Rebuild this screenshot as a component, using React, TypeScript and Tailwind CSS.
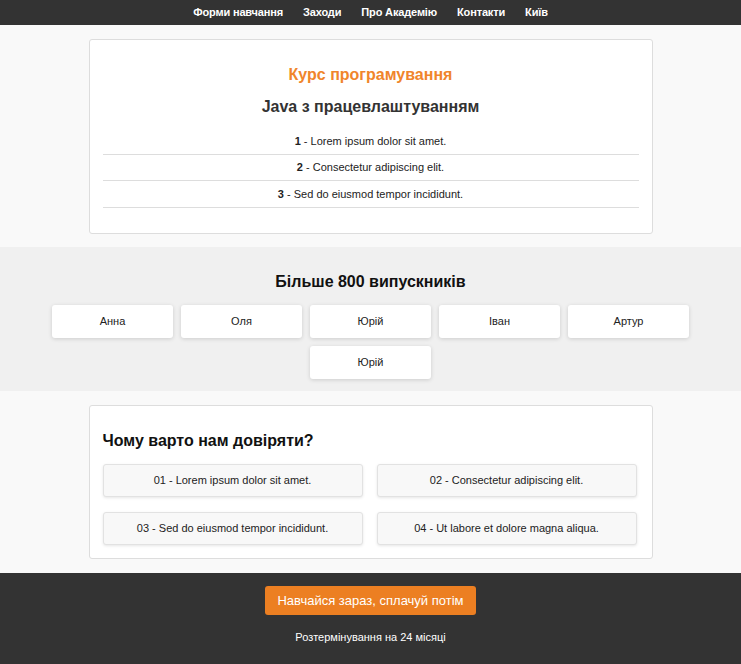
import React from 'react';

const navItems = ['Форми навчання', 'Заходи', 'Про Академію', 'Контакти', 'Київ'];
const courseItems = [
  ['1', 'Lorem ipsum dolor sit amet.'],
  ['2', 'Consectetur adipiscing elit.'],
  ['3', 'Sed do eiusmod tempor incididunt.'],
];
const graduates = ['Анна', 'Оля', 'Юрій', 'Іван', 'Артур', 'Юрій'];
const reasons = [
  '01 - Lorem ipsum dolor sit amet.',
  '02 - Consectetur adipiscing elit.',
  '03 - Sed do eiusmod tempor incididunt.',
  '04 - Ut labore et dolore magna aliqua.',
];

const App: React.FC = () => {
  return (
    <div className="min-h-[664px] bg-[#f9f9f9] font-['Liberation_Sans',Arial,sans-serif] text-[#222]">
      {/* header nav */}
      <nav className="h-[25px] bg-[#333] flex items-center justify-center gap-[20px]">
        {navItems.map((item) => (
          <a key={item} className="text-white text-[11px] font-bold leading-none tracking-[-0.15px]">
            {item}
          </a>
        ))}
      </nav>

      {/* course card */}
      <div className="pt-[14px] pb-[13px]">
        <div className="mx-auto w-[564px] bg-white border border-[#dddddd] rounded-[3px] px-[13px] pt-[25px] pb-[25px] text-center">
          <h2 className="text-[#f0852b] text-[16px] leading-[20px] font-bold">Курс програмування</h2>
          <h3 className="mt-[12px] text-[#333] text-[16px] leading-[20px] font-bold">Java з працевлаштуванням</h3>
          <ul className="mt-[12px]">
            {courseItems.map(([n, t]) => (
              <li key={n} className="h-[26px] leading-[25px] text-[11px] border-b border-[#dddddd] last:h-[27px] last:leading-[26px]">
                <b>{n}</b> - {t}
              </li>
            ))}
          </ul>
        </div>
      </div>

      {/* graduates */}
      <section className="bg-[#f0f0f0] pt-[25px] pb-[12px]">
        <h2 className="text-center text-[16px] leading-[20px] font-bold text-[#111]">Більше 800 випускників</h2>
        <div className="mt-[13px] mx-auto w-[640px] flex flex-wrap justify-center gap-[8px]">
          {graduates.map((g, i) => (
            <div
              key={i}
              className="w-[121px] h-[33px] bg-white rounded-[3px] shadow-[0_1px_4px_rgba(0,0,0,0.15)] flex items-center justify-center text-[11px]"
            >
              {g}
            </div>
          ))}
        </div>
      </section>

      {/* why trust us */}
      <div className="pt-[14px] pb-[14px]">
        <div className="mx-auto w-[564px] bg-white border border-[#dddddd] rounded-[3px] px-[13px] pt-[25px] pb-[13px]">
          <h2 className="text-[16px] leading-[20px] font-bold text-[#111]">Чому варто нам довіряти?</h2>
          <div className="mt-[13px] grid grid-cols-[260px_260px] gap-x-[14px] gap-y-[15px]">
            {reasons.map((r) => (
              <div
                key={r}
                className="h-[33px] bg-[#f8f8f8] border border-[#e2e2e2] rounded-[3px] shadow-[0_1px_3px_rgba(0,0,0,0.1)] flex items-center justify-center text-[11px]"
              >
                {r}
              </div>
            ))}
          </div>
        </div>
      </div>

      {/* footer */}
      <footer className="bg-[#333] pt-[13px] pb-[20px] flex flex-col items-center">
        <button className="h-[29px] px-[12px] bg-[#ec7f22] rounded-[3px] text-white text-[13px] leading-none">
          Навчайся зараз, сплачуй потім
        </button>
        <p className="mt-[16px] text-white text-[11px] leading-[13px]">Розтермінування на 24 місяці</p>
      </footer>
    </div>
  );
};

export default App;
